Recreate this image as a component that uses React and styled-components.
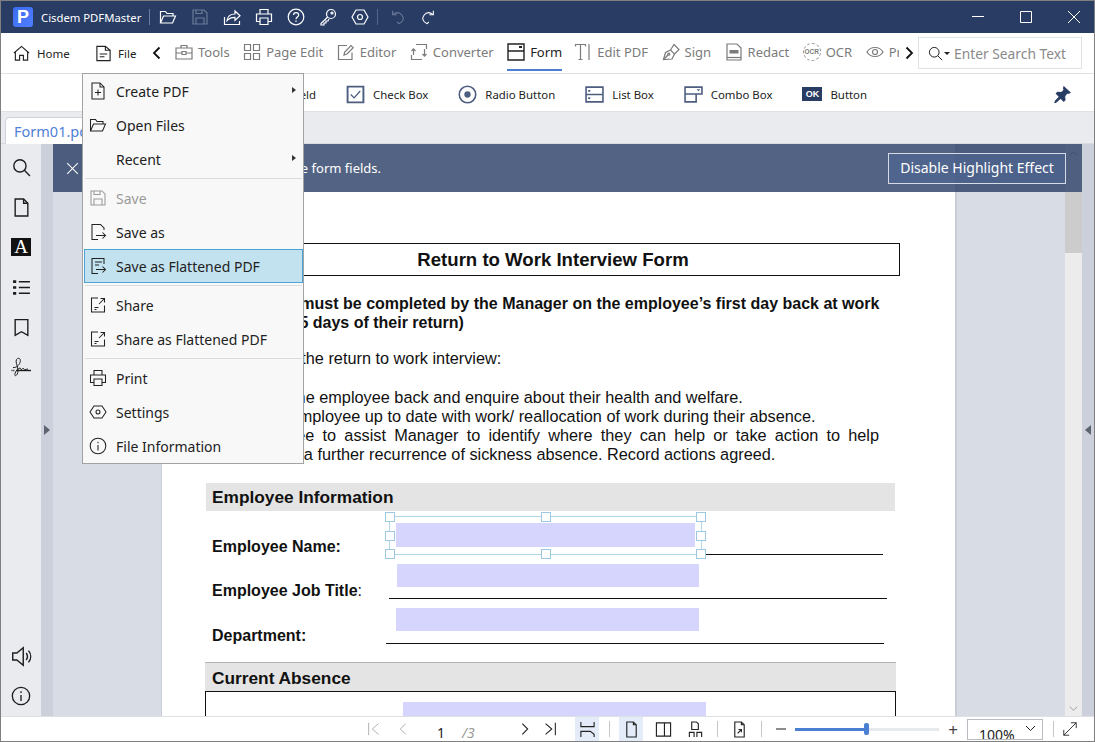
import React from 'react';
import styled, { createGlobalStyle } from 'styled-components';

const GlobalStyle = createGlobalStyle`
  html, body { margin: 0; padding: 0; height: 100%; overflow: hidden; background: #fff; }
  #root { height: 100%; }
  * { box-sizing: border-box; }
`;

function Svg({ size = 18, box = 18, sw = 1.2, children }) {
  return (
    <svg width={size} height={size} viewBox={`0 0 ${box} ${box}`} fill="none" stroke="currentColor" strokeWidth={sw} style={{ display: 'block', flex: 'none' }}>
      {children}
    </svg>
  );
}

const icons = {
  folder: <><path d="M1.5 15V3.5h5l1.5 2h6v2.5" /><path d="M1.5 15h12l3-7H4.5z" /></>,
  save: <><path d="M2 2h11l3 3v11H2z" /><path d="M5 16v-6h8v6M5 2v3.5h6V2" /></>,
  share: <><path d="M1.5 9v7.5h15V13" /><path d="M4 12.5c.6-4 3.6-6.5 8-6.5V3l5 4.7-5 4.7V9.3c-3.400 0-5.800.9-8 3.200z" /></>,
  print: <><path d="M5 6V1.500h8V6M5 13.500H1.500V6h15v7.500H13" /><path d="M5 10h8v6.500H5z" /></>,
  help: <><circle cx="9" cy="9" r="7.800" /><path d="M6.500 7c0-3.300 5.200-3.300 5.200 0 0 2-2.700 2-2.700 4.200M9 12.600v1.400" /></>,
  key: <><circle cx="12" cy="6" r="4.500" /><circle cx="13" cy="5" r="1" /><path d="M8.700 9L2 15.500V17h3v-2h2v-2h2l1-2" /></>,
  gear: <><path d="M5 2h8l4 7-4 7H5L1 9z" /><circle cx="9" cy="9" r="2.500" /></>,
  undo: <><path d="M8 14.500l2 2c5-2 6-6 3.500-9.500C11 3.800 7 3.500 3.500 6" /><path d="M3 2v4.500h4.500" /></>,
  redo: <><path d="M10 14.500l-2 2c-5-2-6-6-3.500-9.500C7 3.800 11 3.500 14.500 6" /><path d="M15 2v4.500h-4.500" /></>,
  home: <><path d="M1 8.500L9 1.500l8 7" /><path d="M2.500 7.500V16H7v-5h4v5h4.500V7.500" /></>,
  doc: <><path d="M2 1.500h9l5 4v11H2z" /><path d="M11 1.500v4h5M5 9.500h8M5 12.500h5" /></>,
  chevL: <path d="M11.500 3.500L6 9l5.500 5.500" />,
  chevR: <path d="M6.500 3.500L12 9l-5.500 5.500" />,
  tools: <><path d="M1 5h16v11H1zM1 10h6M11 10h6M7 8.500h4v3H7zM6 5V2.500h6V5" /></>,
  pages: <><path d="M1.500 1.500h6v6h-6zM10.500 1.500h6v6h-6zM1.500 10.500h6v6h-6zM10.500 10.500h6v6h-6z" /></>,
  editor: <><path d="M15 9.500V16.500H1.500V2.500H10" /><path d="M7 12l.7-3L14 2.500l2.200 2.200L10 11z" /></>,
  convert: <><path d="M6 1.500h10.500V6M12 16.500H1.500V12" /><path d="M3.500 12V6M1.500 8l2-2.200L5.500 8M14.500 6v7M12.500 11l2 2.200 2-2.200" /></>,
  form: <><path d="M1 1h16v16H1zM1 8h16" strokeWidth="1.400" /><path d="M12 3h3v2h-3z" fill="currentColor" stroke="none" /></>,
  editPdf: <><path d="M1.500 3.500v-2h10v2M6.500 1.500V16.500M4.500 16.500h4M15 1v16" /></>,
  sign: <><path d="M1.500 16.500l2-7 5-2.500 4 4-2.500 5z" /><path d="M1.500 16.500l4.500-4.500" /><circle cx="6.800" cy="11.200" r="1" /><path d="M8.500 7l3.500-5.500 5 5L12.500 11" /></>,
  redact: <><path d="M2 1h10l4 4v12H2z" /><path d="M2 14.500h14" /><path d="M4.500 7h9v3.500h-9z" fill="currentColor" stroke="none" /></>,
  eye: <><path d="M1 9c3.500-6 12.500-6 16 0-3.500 6-12.500 6-16 0z" /><circle cx="9" cy="9" r="2.500" /></>,
  checkBox: <><path d="M1.500 1.500h15v15h-15z" strokeWidth="1.800" /><path d="M4.500 9l3.200 3.200 5.800-6.500" /></>,
  radio: <><circle cx="9" cy="9" r="7.800" strokeWidth="1.500" /><circle cx="9" cy="9" r="3" fill="currentColor" stroke="none" /></>,
  listBox: <><path d="M1 2h16v14H1zM1 9h16" strokeWidth="1.500" /><path d="M3 5.500h2M3 12.500h2" strokeWidth="1.600" /></>,
  combo: <><path d="M1 2h16v6.500H1zM1 8.500V16h10.500V8.500" strokeWidth="1.500" /><path d="M12 4h3.400l-1.700 2z" fill="currentColor" stroke="none" /></>,
  pin: <path d="M10.500 1l6.500 6-1.300.7-1.700-.3-2.700 3.100.3 4.200-1.300 1.300-3.300-3.300-4.600 4.300-1.400.5.500-1.500 4.300-4.600L2.500 8l1.300-1.300 4.200.3 2.700-2.700-.5-1.700z" fill="currentColor" stroke="currentColor" />,
  search: <><circle cx="7.500" cy="7.500" r="5.800" /><path d="M11.700 11.700L17 17" /></>,
  page: <><path d="M3 1h8l4 4v12H3z" /><path d="M11 1v4h4" /></>,
  bookmark: <path d="M3 1.500h12V16.500L9 13l-6 3.500z" />,
  list: <><path d="M1 3.500h3M1 9h3M1 14.500h3" strokeWidth="2.600" /><path d="M6.500 3.500H17M6.500 9H17M6.500 14.500H17" strokeWidth="1.500" /></>,
  signature: <><path d="M6 14.500h15" strokeWidth="1.400" /><path d="M1.500 14.500h3.500" strokeDasharray="1 .8" strokeWidth="1.400" /><path d="M3 11.500c3 .5 6-2 7-5s-.5-5-2.500-4-1.500 4-.5 7 1.500 7 0 9-2.500 1.500-2-1 3-5 5-5.500c1 0 .5 2 1.500 1.500s1-1.500 2-1 .5 1.500 1.500 1.200 2-.7 3-.7" /></>,
  speaker: <><path d="M1.500 6v6h3.500l5.500 4.500V1.500L5 6z" /><path d="M13 6c1.500 2 1.500 4 0 6M15 4c2.500 3 2.500 7 0 10" /></>,
  info: <><circle cx="9" cy="9" r="7.800" /><path d="M9 8v5.500M9 4.800v1.500" /></>,
  plusDoc: <><path d="M3 1h8l4 4v12H3z" /><path d="M11 1v4h4M9 7.500v6M6 10.500h6" /></>,
  saveAs: <><path d="M15 7V5l-3.500-3.500H3v15h6" /><path d="M7 12.500h9.500M13.500 9.500l3 3-3 3" /></>,
  saveFlat: <><path d="M15 7V1.500H3v15h6" /><path d="M6 5h7M6 8h4M7 12.500h9.500M13.500 9.500l3 3-3 3" /></>,
  shareDoc: <><path d="M9 2H2.500v14h13V9.500" /><path d="M5.500 11.500h4M5.500 13.500h2M10 8l5.500-5.500M11.500 2.500h4v4" /></>,
  gearSm: <><path d="M5 3h8l4 6-4 6H5L1 9z" /><circle cx="9" cy="9" r="2" /></>,
  first: <path d="M3 2v14M14 3L7 9l7 6" />,
  prev: <path d="M12 3L6 9l6 6" />,
  next: <path d="M6 3l6 6-6 6" />,
  last: <path d="M15 2v14M4 3l7 6-7 6" />,
  fit: <path d="M2 1v5h14V1M2 17v-6h10l4 3v3" />,
  single: <path d="M4 1h7l3 3v13H4zM11 1v3h3" />,
  twoUp: <path d="M1.500 2h15v14h-15zM10 2v14" />,
  grid: <path d="M5 1h5l2 2v6H5zM2.500 17v-5h5v5M10.500 17v-5h5v5" />,
  extract: <><path d="M4 1h7l3 3v13H4zM11 1v3h3" /><path d="M7 13l4-4M8 9h3v3" /></>,
  expand: <path d="M2 16L16 2M10 2h6v6M2 10v6h6" />,
};

const Icon = ({ name, ...rest }) => <Svg {...rest}>{icons[name]}</Svg>;

const menuGroups = [
  [['Create PDF', 'plusDoc', true], ['Open Files', 'folder'], ['Recent', null, true]],
  [['Save', 'save', false, true], ['Save as', 'saveAs'], ['Save as Flattened PDF', 'saveFlat', false, false, true]],
  [['Share', 'shareDoc'], ['Share as Flattened PDF', 'shareDoc']],
  [['Print', 'print'], ['Settings', 'gearSm'], ['File Information', 'info']],
];

const tabs = [
  ['Tools', 'tools'], ['Page Edit', 'pages'], ['Editor', 'editor'], ['Converter', 'convert'], ['Form', 'form', true],
  ['Edit PDF', 'editPdf'], ['Sign', 'sign'], ['Redact', 'redact'], ['OCR', null], ['Protect', 'eye'],
];

const formTools = [
  ['Text Field', 'form'], ['Check Box', 'checkBox'], ['Radio Button', 'radio'], ['List Box', 'listBox'], ['Combo Box', 'combo'],
];

function App() {
  return (
    <Frame>
      <GlobalStyle />
      <TitleBar>
        <Logo>P</Logo>
        <AppName>Cisdem PDFMaster</AppName>
        <TitleSep />
        <TitleIcons>
          <TitleIcon><Icon name="folder" /></TitleIcon>
          <TitleIcon $dim><Icon name="save" /></TitleIcon>
          <TitleIcon><Icon name="share" /></TitleIcon>
          <TitleIcon><Icon name="print" /></TitleIcon>
          <TitleIcon><Icon name="help" /></TitleIcon>
          <TitleIcon><Icon name="key" /></TitleIcon>
          <TitleIcon><Icon name="gear" /></TitleIcon>
        </TitleIcons>
        <TitleSep $dim />
        <UndoIcons>
          <TitleIcon $dim><Icon name="undo" size={16} /></TitleIcon>
          <TitleIcon><Icon name="redo" size={16} /></TitleIcon>
        </UndoIcons>
        <WindowControls>
          <svg width="12" height="12" viewBox="0 0 12 12" stroke="#fff" fill="none"><path d="M0 5.500h12" /></svg>
          <svg width="12" height="12" viewBox="0 0 12 12" stroke="#fff" fill="none"><path d="M.5.500h11v11H.5z" /></svg>
          <svg width="12" height="12" viewBox="0 0 12 12" stroke="#fff" fill="none"><path d="M0 0l12 12M12 0L0 12" /></svg>
        </WindowControls>
      </TitleBar>

      <MainBar>
        <HomeItem><Icon name="home" size={17} /><span>Home</span></HomeItem>
        <FileItem><Icon name="doc" size={17} /><span>File</span></FileItem>
        <Chevron><Icon name="chevL" sw={1.800} /></Chevron>
        <TabScroller>
          {tabs.map(([label, icon, active]) => (
            <Tab key={label} $active={active}>
              {icon ? <Icon name={icon} /> : <OcrMark>OCR</OcrMark>}
              <span>{label}</span>
            </Tab>
          ))}
        </TabScroller>
        <NextChevron><Icon name="chevR" sw={1.800} /></NextChevron>
        <SearchBox>
          <Icon name="search" size={15} />
          <SearchCaret />
          <SearchText>Enter Search Text</SearchText>
        </SearchBox>
      </MainBar>

      <FormBar>
        {formTools.map(([label, icon]) => (
          <FormTool key={label}><Icon name={icon} size={19} /><span>{label}</span></FormTool>
        ))}
        <FormTool><OkBadge>OK</OkBadge><span>Button</span></FormTool>
        <PinSlot><Icon name="pin" size={17} /></PinSlot>
      </FormBar>

      <TabRow>
        <DocTab>Form01.pdf</DocTab>
      </TabRow>

      <Workspace>
        <SideBar>
          <SideGroup>
            <SideIcon><Icon name="search" size={19} sw={1.300} /></SideIcon>
            <SideIcon><Icon name="page" size={19} sw={1.300} /></SideIcon>
            <SideIcon><FontMark>A</FontMark></SideIcon>
            <SideIcon><Icon name="list" size={19} /></SideIcon>
            <SideIcon><Icon name="bookmark" size={19} sw={1.300} /></SideIcon>
            <SideIcon><Icon name="signature" size={22} box={22} sw={1} /></SideIcon>
          </SideGroup>
          <SideGroup>
            <SideIcon><Icon name="speaker" size={21} /></SideIcon>
            <SideIcon><Icon name="info" size={20} /></SideIcon>
          </SideGroup>
        </SideBar>
        <CollapseStrip><ArrowRight /></CollapseStrip>
        <Canvas>
          <Page>
            <TitleBox>Return to Work Interview Form</TitleBox>
            <Intro>
              This form must be completed by the Manager on the employee&rsquo;s first day back at work
              <br />
              (or within 5 days of their return)
            </Intro>
            <Purpose>Purpose of the return to work interview:</Purpose>
            <Points>
              <Point>Welcome the employee back and enquire about their health and welfare.</Point>
              <Point>Bring the employee up to date with work/ reallocation of work during their absence.</Point>
              <Point $justify>Employee to assist Manager to identify where they can help or take action to help</Point>
              <Point $inset>prevent a further recurrence of sickness absence. Record actions agreed.</Point>
            </Points>
            <SectionBar>Employee Information</SectionBar>
            <Fields>
              <FieldRow>
                <FieldLabel $w={176}>Employee Name:</FieldLabel>
                <FieldLine $w={495} />
              </FieldRow>
              <FieldRow>
                <FieldLabel $w={177}>Employee Job Title<Plain>:</Plain></FieldLabel>
                <FieldLine $w={498} />
              </FieldRow>
              <FieldRow>
                <FieldLabel $w={174}>Department:</FieldLabel>
                <FieldLine $w={498} />
              </FieldRow>
            </Fields>
            <SectionBar $ruled>Current Absence</SectionBar>
            <AbsenceBox />
            <FormField $x={234} $y={379} $w={299} $h={24} />
            <FormField $x={235} $y={420} $w={302} $h={23} />
            <FormField $x={234} $y={464} $w={303} $h={23} />
            <FormField $x={241} $y={558} $w={303} $h={24} />
            <Selection>
              {[[0, 0], [50, 0], [100, 0], [0, 50], [100, 50], [0, 100], [50, 100], [100, 100]].map(([hx, hy]) => (
                <Handle key={`${hx}-${hy}`} style={{ left: `${hx}%`, top: `${hy}%` }} />
              ))}
            </Selection>
          </Page>
        </Canvas>
        <ScrollTrack>
          <ScrollUp><Icon name="next" size={11} sw={1.500} /></ScrollUp>
          <ScrollThumb />
          <ScrollDown><Icon name="next" size={11} sw={1.500} /></ScrollDown>
        </ScrollTrack>
        <RightStrip><ArrowLeft /></RightStrip>
        <Banner>
          <BannerClose />
          <BannerText>Highlight effect is on. Edit the form fields.</BannerText>
          <DisableButton>Disable Highlight Effect</DisableButton>
        </Banner>
      </Workspace>

      <StatusBar>
        <StatusBtn $off><Icon name="first" size={16} sw={1} /></StatusBtn>
        <StatusBtn $off $ml={5}><Icon name="prev" size={16} sw={1} /></StatusBtn>
        <PageNumber><b>1</b><i>/3</i></PageNumber>
        <StatusBtn><Icon name="next" size={16} /></StatusBtn>
        <StatusBtn $ml={1}><Icon name="last" size={16} /></StatusBtn>
        <StatusBtn $ml={13} $on><Icon name="fit" size={17} /></StatusBtn>
        <StatusSep />
        <StatusBtn $on><Icon name="single" size={17} /></StatusBtn>
        <StatusBtn $ml={8}><Icon name="twoUp" size={17} /></StatusBtn>
        <StatusBtn $ml={8}><Icon name="grid" size={17} /></StatusBtn>
        <StatusSep />
        <StatusBtn><Icon name="extract" size={17} /></StatusBtn>
        <StatusSep />
        <StatusBtn $ml={-2}><Minus /></StatusBtn>
        <Slider>
          <SliderFill style={{ width: '50%' }} />
          <SliderThumb />
        </Slider>
        <StatusBtn $ml={2}><PlusMark>+</PlusMark></StatusBtn>
        <ZoomSelect>
          <span>100%</span>
          <svg width="11" height="7" viewBox="0 0 11 7" fill="none" stroke="#222"><path d="M1 1l4.500 4.500L10 1" /></svg>
        </ZoomSelect>
        <StatusSep />
        <StatusBtn $ml={-5}><Icon name="expand" size={16} sw={1} /></StatusBtn>
      </StatusBar>

      <FileMenu>
        {menuGroups.map((group, index) => (
          <MenuGroup key={group[0][0]} $first={index === 0}>
            {group.map(([label, icon, sub, off, hot]) => (
              <MenuItem key={label} $off={off} $hot={hot}>
                <MenuIcon>{icon && <Icon name={icon} size={18} sw={1.050} />}</MenuIcon>
                <span>{label}</span>
                {sub && <SubArrow />}
              </MenuItem>
            ))}
          </MenuGroup>
        ))}
      </FileMenu>
    </Frame>
  );
}

const Frame = styled.div`
  position: relative;
  display: flex;
  flex-direction: column;
  width: 1095px;
  height: 742px;
  border: 1px solid #7f7f7f;
  overflow: hidden;
  font-family: "Noto Sans", "Open Sans", sans-serif;
  color: #222;
`;

const TitleBar = styled.div`
  display: flex;
  align-items: center;
  flex: none;
  height: 32px;
  padding-left: 12px;
  background: #283c64;
  color: #fff;
`;

const Logo = styled.div`
  display: flex;
  align-items: center;
  justify-content: center;
  width: 20px;
  height: 20px;
  border-radius: 3px;
  background: linear-gradient(135deg, #3d6cf0, #4f7dff);
  color: #fff;
  font: bold 18px "Liberation Sans", sans-serif;
`;

const AppName = styled.div`
  width: 100px;
  margin-left: 8px;
  font-size: 11.300px;
  white-space: nowrap;
`;

const TitleSep = styled.div`
  width: 1px;
  height: 16px;
  margin: 0 8px;
  background: ${(p) => (p.$dim ? '#56678a' : '#6d7c9c')};
`;

const TitleIcons = styled.div`
  display: flex;
  gap: 14px;
  margin-left: 1px;
`;

const TitleIcon = styled.div`
  color: ${(p) => (p.$dim ? '#6c7a97' : '#fff')};
`;

const UndoIcons = styled.div`
  display: flex;
  gap: 14px;
  margin-left: 4px;
`;

const WindowControls = styled.div`
  display: flex;
  gap: 36px;
  margin-left: auto;
  padding-right: 14px;
`;

const MainBar = styled.div`
  display: flex;
  align-items: center;
  flex: none;
  height: 41px;
  padding-left: 12px;
  background: #fff;
  border-bottom: 1px solid #dfe1e6;
`;

const HomeItem = styled.div`
  display: flex;
  align-items: center;
  gap: 7px;
  font-size: 11.500px;
  width: 82px;
`;

const FileItem = styled(HomeItem)`
  width: 53px;
  gap: 6px;
`;

const Chevron = styled.div`
  width: 18px;
  flex: none;
  color: #111;
`;

const NextChevron = styled(Chevron)`
  margin-left: 1px;
`;

const TabScroller = styled.div`
  display: flex;
  gap: 13.500px;
  width: 724px;
  flex: none;
  margin-left: 9px;
  overflow: hidden;
  height: 40px;
`;

const Tab = styled.div`
  display: flex;
  align-items: center;
  flex: none;
  gap: 5px;
  height: 38px;
  margin-right: ${(p) => (p.$active ? '-1.500px' : '0')};
  font-size: 13px;
  color: ${(p) => (p.$active ? '#222' : '#7b7b7b')};
  box-shadow: ${(p) => (p.$active ? 'inset 0 -2px 0 #4a7fd4' : 'none')};
`;

const OcrMark = styled.div`
  width: 18px;
  height: 18px;
  border: 1px dashed #8a8a8a;
  border-radius: 50%;
  font: bold 6.500px/16px "Liberation Sans", sans-serif;
  text-align: center;
`;

const SearchBox = styled.div`
  display: flex;
  align-items: center;
  width: 164px;
  height: 32px;
  padding-left: 9px;
  border: 1px solid #dfe1e6;
`;

const SearchCaret = styled.div`
  width: 0;
  height: 0;
  margin: 3px 0 0 1px;
  border: 3px solid transparent;
  border-top-color: #222;
`;

const SearchText = styled.div`
  margin-left: 4px;
  font-size: 13.800px;
  color: #8a8a8a;
  white-space: nowrap;
`;

const FormBar = styled.div`
  display: flex;
  align-items: center;
  flex: none;
  height: 38px;
  gap: 30px;
  padding: 3px 0 0 238px;
  background: #fff;
  border-bottom: 1px solid #dfe1e6;
`;

const FormTool = styled.div`
  display: flex;
  align-items: center;
  gap: 8px;
  font-size: 11.400px;
  color: #4d5d80;
  white-space: nowrap;
  > span { color: #222; }
`;

const OkBadge = styled.div`
  width: 20px;
  height: 14px;
  background: #283c64;
  color: #fff;
  font: bold 9px/14px "Liberation Sans", sans-serif;
  text-align: center;
`;

const PinSlot = styled.div`
  margin-left: auto;
  padding-right: 23px;
  color: #283c64;
`;

const TabRow = styled.div`
  flex: none;
  height: 32px;
  padding: 5px 0 0 4px;
  background: #e9ebef;
  border-bottom: 1px solid #d8dbe1;
`;

const DocTab = styled.div`
  width: 120px;
  height: 27px;
  padding: 3px 8px;
  background: #fff;
  border: 1px solid #cfd2d8;
  border-bottom: 0;
  border-radius: 5px 5px 0 0;
  color: #4f7fd8;
  font-size: 14.500px;
`;

const Workspace = styled.div`
  position: relative;
  display: flex;
  flex: 1;
  min-height: 0;
`;

const SideBar = styled.div`
  display: flex;
  flex-direction: column;
  justify-content: space-between;
  flex: none;
  width: 40px;
  padding: 3px 0 0;
  background: #e9ebef;
`;

const SideGroup = styled.div`
  display: flex;
  flex-direction: column;
`;

const SideIcon = styled.div`
  display: flex;
  align-items: center;
  justify-content: center;
  width: 40px;
  height: 40px;
  color: #1c1c1c;
`;

const FontMark = styled.div`
  width: 20px;
  height: 18px;
  background: #111;
  color: #fff;
  font: 19px/18px "Liberation Serif", serif;
  text-align: center;
`;

const CollapseStrip = styled.div`
  display: flex;
  align-items: center;
  flex: none;
  width: 12px;
  padding-left: 3px;
  background: #cbd0da;
`;

const ArrowRight = styled.div`
  width: 0;
  height: 0;
  border: 5px solid transparent;
  border-left: 6px solid #5c6470;
  border-right: 0;
`;

const ArrowLeft = styled.div`
  width: 0;
  height: 0;
  border: 5px solid transparent;
  border-right: 6px solid #5c6470;
  border-left: 0;
`;

const Canvas = styled.div`
  flex: 1;
  min-width: 0;
  overflow: hidden;
  padding-left: 108px;
  background: #d8dce5;
`;

const Page = styled.div`
  position: relative;
  width: 796px;
  height: 900px;
  padding: 99px 55px 0 44px;
  background: #fff;
  border-left: 1px solid #c8cdd8;
  border-right: 2px solid #c8cdd8;
  color: #111;
  font-family: "Liberation Sans", Arial, sans-serif;
`;

const TitleBox = styled.div`
  height: 33px;
  border: 1.500px solid #111;
  font-size: 18.600px;
  font-weight: bold;
  line-height: 31px;
  text-align: center;
`;

const Intro = styled.div`
  margin: 18px 0 0 17px;
  font-size: 16px;
  font-weight: bold;
  line-height: 19px;
  white-space: nowrap;
`;

const Purpose = styled.div`
  margin: 17px 0 0 12px;
  font-size: 16.300px;
  line-height: 19px;
`;

const Points = styled.div`
  margin: 20px 21px 0 14px;
  font-size: 16.300px;
  line-height: 19px;
`;

const Point = styled.div`
  white-space: nowrap;
  ${(p) => p.$justify && 'margin-left: 22px; text-align: justify; text-align-last: justify; white-space: normal;'}
  ${(p) => p.$inset && 'margin-left: 25px;'}
`;

const SectionBar = styled.div`
  width: ${(p) => (p.$ruled ? '691px' : '689px')};
  height: ${(p) => (p.$ruled ? '29px' : '28px')};
  margin: ${(p) => (p.$ruled ? '17px 0 0 -1px' : '19px 0 0')};
  padding-left: ${(p) => (p.$ruled ? '7px' : '6px')};
  background: #e4e4e4;
  border-top: ${(p) => (p.$ruled ? '1px solid #b4b4b4' : '0')};
  font-size: 17.300px;
  font-weight: bold;
  line-height: ${(p) => (p.$ruled ? '30px' : '28px')};
`;

const Fields = styled.div`
  display: flex;
  flex-direction: column;
  gap: 24px;
  padding: 25px 0 0 6px;
`;

const FieldRow = styled.div`
  display: flex;
  align-items: flex-end;
  height: 20px;
  &:last-child { margin-top: 1px; }
`;

const FieldLabel = styled.div`
  width: ${(p) => p.$w}px;
  flex: none;
  margin-bottom: 1px;
  font-size: 16px;
  font-weight: bold;
  line-height: 16px;
  white-space: nowrap;
`;

const Plain = styled.span`
  font-weight: normal;
`;

const FieldLine = styled.div`
  width: ${(p) => p.$w}px;
  height: 1px;
  margin-bottom: 1px;
  background: #111;
`;

const AbsenceBox = styled.div`
  width: 691px;
  height: 120px;
  margin-left: -1px;
  border: 1.500px solid #111;
`;

const FormField = styled.div`
  position: absolute;
  left: ${(p) => p.$x}px;
  top: ${(p) => p.$y}px;
  width: ${(p) => p.$w}px;
  height: ${(p) => p.$h}px;
  background: #d6d5fd;
`;

const Selection = styled.div`
  position: absolute;
  left: 227px;
  top: 372px;
  width: 313px;
  height: 39px;
  border: 1.500px solid #b3d7ea;
`;

const Handle = styled.div`
  position: absolute;
  width: 10px;
  height: 10px;
  margin: -5px 0 0 -5px;
  background: #fff;
  border: 1.500px solid #9cc8e2;
`;

const Banner = styled.div`
  position: absolute;
  top: 0;
  left: 52px;
  right: 12px;
  z-index: 2;
  display: flex;
  align-items: center;
  height: 48px;
  padding: 0 16px 0 13px;
  background: rgba(40, 60, 100, 0.8);
  color: #fff;
`;

const BannerClose = styled.div`
  position: relative;
  flex: none;
  width: 13px;
  height: 13px;
  &::before, &::after {
    content: '';
    position: absolute;
    left: 6px;
    top: -1px;
    width: 1px;
    height: 15px;
    background: #fff;
  }
  &::before { transform: rotate(45deg); }
  &::after { transform: rotate(-45deg); }
`;

const BannerText = styled.div`
  margin-left: 49px;
  font-size: 13px;
  white-space: nowrap;
`;

const DisableButton = styled.div`
  margin-left: auto;
  width: 178px;
  height: 31px;
  border: 1px solid #d6dae3;
  background: rgba(78, 104, 150, 0.55);
  font-size: 14px;
  line-height: 28px;
  text-align: center;
  white-space: nowrap;
`;

const ScrollTrack = styled.div`
  position: relative;
  flex: none;
  width: 17px;
  padding-top: 48px;
  background: #ececec;
`;

const ScrollThumb = styled.div`
  height: 61px;
  background: #ccc;
`;

const ScrollDown = styled.div`
  position: absolute;
  left: 0;
  bottom: 0;
  display: flex;
  align-items: center;
  justify-content: center;
  width: 17px;
  height: 16px;
  color: #999;
  svg { transform: rotate(90deg); }
`;

const ScrollUp = styled(ScrollDown)`
  top: 0;
  bottom: auto;
  height: 18px;
  svg { transform: rotate(-90deg); }
`;

const RightStrip = styled.div`
  display: flex;
  align-items: center;
  flex: none;
  width: 12px;
  padding-left: 3px;
  background: #cbd0da;
`;

const StatusBar = styled.div`
  display: flex;
  align-items: center;
  flex: none;
  height: 25px;
  padding-left: 361px;
  background: #fff;
  border-top: 1px solid #dde0e5;
`;

const StatusBtn = styled.div`
  display: flex;
  align-items: center;
  justify-content: center;
  flex: none;
  width: 24px;
  height: 24px;
  margin-left: ${(p) => p.$ml || 0}px;
  background: ${(p) => (p.$on ? '#e3ecf8' : 'transparent')};
  color: ${(p) => (p.$off ? '#a8a8a8' : '#222')};
`;

const StatusSep = styled.div`
  flex: none;
  width: 1px;
  height: 16px;
  margin: 0 9.500px;
  background: #c4c6ca;
`;

const PageNumber = styled.div`
  display: flex;
  width: 98px;
  height: 24px;
  padding: 6px 0 0 22px;
  font-size: 14px;
  line-height: 20px;
  b { font-weight: normal; width: 25px; }
  i { color: #9a9a9a; }
`;

const Minus = styled.div`
  width: 10px;
  height: 2px;
  background: #8c8c8c;
`;

const PlusMark = styled.div`
  font-size: 17px;
  color: #444;
`;

const Slider = styled.div`
  position: relative;
  flex: none;
  width: 144px;
  height: 3px;
  margin-left: 2px;
  background: #e6eaee;
`;

const SliderFill = styled.div`
  height: 3px;
  background: #4a7fd4;
`;

const SliderThumb = styled.div`
  position: absolute;
  left: 69px;
  top: -5px;
  width: 5px;
  height: 12px;
  border-radius: 2px;
  background: #4a7fd4;
`;

const ZoomSelect = styled.div`
  display: flex;
  justify-content: space-between;
  flex: none;
  width: 76px;
  height: 21px;
  margin-left: 2px;
  padding: 5px 6px 0 11px;
  border: 1px solid #b9bcc2;
  font-size: 14px;
  line-height: 20px;
  overflow: hidden;
`;

const FileMenu = styled.div`
  position: absolute;
  left: 81px;
  top: 72px;
  z-index: 5;
  width: 222px;
  background: #f8f8f8;
  border: 1px solid #a3a3a3;
`;

const MenuGroup = styled.div`
  padding-left: 1px;
  ${(p) => !p.$first && `
    &::before {
      content: '';
      display: block;
      height: 1px;
      margin: 2px 1px;
      background: #dcdcdc;
    }
  `}
`;

const MenuItem = styled.div`
  display: flex;
  align-items: center;
  position: relative;
  height: 34px;
  padding-left: 4px;
  border: 1px solid ${(p) => (p.$hot ? '#4aa5d6' : 'transparent')};
  background: ${(p) => (p.$hot ? '#c3e2f0' : 'transparent')};
  color: ${(p) => (p.$off ? '#9a9a9a' : '#222')};
  font-size: 14px;
  white-space: nowrap;
`;

const MenuIcon = styled.div`
  flex: none;
  width: 27px;
`;

const SubArrow = styled.div`
  position: absolute;
  right: 6px;
  top: 12px;
  width: 0;
  height: 0;
  border: 3.500px solid transparent;
  border-left: 4px solid #333;
  border-right: 0;
`;

export default App;
